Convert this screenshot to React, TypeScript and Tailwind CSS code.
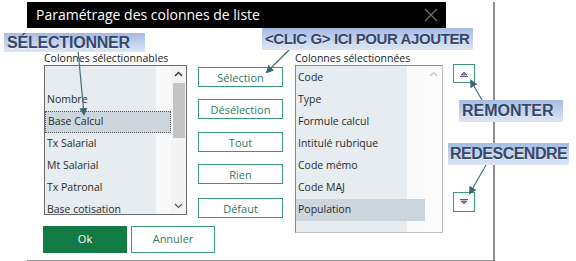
import React from 'react';

const leftItems = ['', 'Nombre', 'Base Calcul', 'Tx Salarial', 'Mt Salarial', 'Tx Patronal', 'Base cotisation'];
const rightItems = ['Code', 'Type', 'Formule calcul', 'Intitulé rubrique', 'Code mémo', 'Code MAJ', 'Population'];
const actions = [
  { label: 'Sélection', mt: 'mt-[16px]' },
  { label: 'Désélection', mt: 'mt-[12px]' },
  { label: 'Tout', mt: 'mt-[13px]' },
  { label: 'Rien', mt: 'mt-[12px]' },
  { label: 'Défaut', mt: 'mt-[14px]' },
];

const Callout = ({ text, className }: { text: string; className: string }) => (
  <div
    className={`absolute flex items-center whitespace-nowrap bg-[linear-gradient(to_bottom,#a6bbe3,#dde6f5)] font-['Liberation_Sans',Arial,sans-serif] font-bold text-[#34476a] [text-shadow:0_1px_1px_rgba(255,255,255,0.6)] ${className}`}
  >
    {text}
  </div>
);

export default function App() {
  return (
    <div className="relative w-[576px] h-[261px] overflow-hidden bg-white font-['Open_Sans',sans-serif]">
      {/* dialog frame */}
      <div className="ml-[27px] w-[468px] h-[260px] border-r-2 border-b-2 border-[#8e8e8e]">
        <div className="mt-[2px] w-[419px] h-[26px] bg-black flex items-center justify-between pl-[9px] pr-[7px]">
          <span className="text-white text-[14px] leading-none">Paramétrage des colonnes de liste</span>
          <svg width="14" height="14" viewBox="0 0 14 14" className="mr-[1px]">
            <path d="M1 1 L13 13 M13 1 L1 13" stroke="#6f6f6f" strokeWidth="1.3" />
          </svg>
        </div>

        <div className="flex items-start pl-[17px] mt-[23px]">
          <div className="flex flex-col">
            <div className="flex items-start">
              {/* left list */}
              <div className="flex flex-col w-[143px]">
                <div className="h-[14px] text-[10.5px] leading-[14px] text-[#222]">Colonnes sélectionnables</div>
                <div className="flex h-[150px] border border-[#6b6b6b] bg-white">
                  <div className="flex-1 pt-px bg-[linear-gradient(to_right,#e6ecef_111px,#f8f9fa_111px)]">
                    {leftItems.map((it, i) => (
                      <div
                        key={i}
                        className={`h-[22px] flex items-center px-[2px] text-[10.5px] text-[#2b2b2b] ${
                          it === 'Base Calcul' ? 'bg-[#ccd6dc] border border-dotted border-[#555]' : ''
                        }`}
                      >
                        {it}
                      </div>
                    ))}
                  </div>
                  <div className="w-[15px] flex flex-col items-center bg-[#f4f4f4]">
                    <svg width="9" height="6" viewBox="0 0 9 6" className="mt-[5px]">
                      <path d="M1 5 L4.5 1.5 L8 5" stroke="#333" strokeWidth="1.4" fill="none" />
                    </svg>
                    <div className="mt-[6px] w-[12px] h-[55px] bg-[#c4c4c4]" />
                    <div className="flex-1" />
                    <svg width="9" height="6" viewBox="0 0 9 6" className="mb-[5px]">
                      <path d="M1 1 L4.5 4.5 L8 1" stroke="#555" strokeWidth="1.2" fill="none" />
                    </svg>
                  </div>
                </div>
              </div>

              {/* action buttons */}
              <div className="flex flex-col ml-[11px]">
                {actions.map((a) => (
                  <button
                    key={a.label}
                    className={`${a.mt} w-[85px] h-[20px] border border-[#3a9a76] bg-white text-[11px] leading-none text-[#2b7b5c]`}
                  >
                    {a.label}
                  </button>
                ))}
              </div>
            </div>

            <div className="flex gap-[4px] mt-[8px] -ml-px">
              <button className="w-[84px] h-[27px] bg-[#117a45] text-white text-[11px]">Ok</button>
              <button className="w-[84px] h-[27px] border border-[#3a9a76] bg-white text-[#2b7b5c] text-[11px]">Annuler</button>
            </div>
          </div>

          {/* right list */}
          <div className="flex flex-col w-[148px] ml-[12px]">
            <div className="h-[14px] text-[10.5px] leading-[14px] text-[#222]">Colonnes sélectionnées</div>
            <div className="flex h-[168px] border border-[#8a8a8a] border-r-[#bdbdbd] border-b-[#bdbdbd] bg-white">
              <div className="flex-1 pt-px bg-[linear-gradient(to_right,#e6ecef_111px,#fafafa_111px)]">
                {rightItems.map((it) => (
                  <div
                    key={it}
                    className={`h-[22px] flex items-center px-[2px] text-[10.5px] text-[#2b2b2b] ${
                      it === 'Population' ? 'bg-[#cdd6dc]' : ''
                    }`}
                  >
                    {it}
                  </div>
                ))}
              </div>
              <div className="w-[17px] flex flex-col items-center bg-[#fbfbfb]">
                <svg width="9" height="6" viewBox="0 0 9 6" className="mt-[5px]">
                  <path d="M1 5 L4.5 1.5 L8 5" stroke="#c8c8c8" strokeWidth="1.2" fill="none" />
                </svg>
              </div>
            </div>
          </div>

          {/* move buttons */}
          <div className="flex flex-col ml-[10px]">
            <button className="mt-[13px] w-[22px] h-[19px] border border-[#3a9a76] bg-white flex items-center justify-center">
              <svg width="10" height="7" viewBox="0 0 10 7">
                <path d="M2 5 L5 2 L8 5 Z" fill="#8f84b5" stroke="#5e5290" strokeWidth="0.8" />
                <path d="M1 6.5 H9" stroke="#5e5290" strokeWidth="1" />
              </svg>
            </button>
            <button className="mt-[109px] w-[22px] h-[20px] border border-[#3a9a76] bg-white flex items-center justify-center">
              <svg width="10" height="7" viewBox="0 0 10 7">
                <path d="M1 0.5 H9" stroke="#5e5290" strokeWidth="1" />
                <path d="M2 2 L5 5 L8 2 Z" fill="#8f84b5" stroke="#5e5290" strokeWidth="0.8" />
              </svg>
            </button>
          </div>
        </div>
      </div>

      {/* annotation arrows */}
      <svg className="absolute left-0 top-0 pointer-events-none" width="576" height="261" viewBox="0 0 576 261">
        <defs>
          <marker id="ah" markerWidth="8" markerHeight="8" refX="6" refY="4" orient="auto" markerUnits="userSpaceOnUse">
            <path d="M0 0 L8 4 L0 8 Z" fill="#3d6675" />
          </marker>
        </defs>
        <g stroke="#4d6f7c" strokeWidth="1.2" fill="none">
          <line x1="78" y1="50" x2="84" y2="114" markerEnd="url(#ah)" />
          <line x1="293" y1="46" x2="267" y2="72" markerEnd="url(#ah)" />
          <line x1="482" y1="100" x2="471" y2="81" markerEnd="url(#ah)" />
          <line x1="486" y1="165" x2="470" y2="193" markerEnd="url(#ah)" />
        </g>
      </svg>

      <Callout text="SÉLECTIONNER" className="left-[4px] top-[33px] w-[141px] h-[19px] pl-[3px] text-[16px] tracking-[-0.2px]" />
      <Callout text="<CLIC G> ICI POUR AJOUTER" className="left-[262px] top-[28px] w-[211px] h-[22px] pl-[3px] text-[15px] tracking-[-0.4px]" />
      <Callout text="REMONTER" className="left-[459px] top-[100px] w-[104px] h-[22px] pl-[3px] text-[16px]" />
      <Callout text="REDESCENDRE" className="left-[448px] top-[143px] w-[121px] h-[22px] pl-[2px] text-[16px] tracking-[-0.5px]" />
    </div>
  );
}
